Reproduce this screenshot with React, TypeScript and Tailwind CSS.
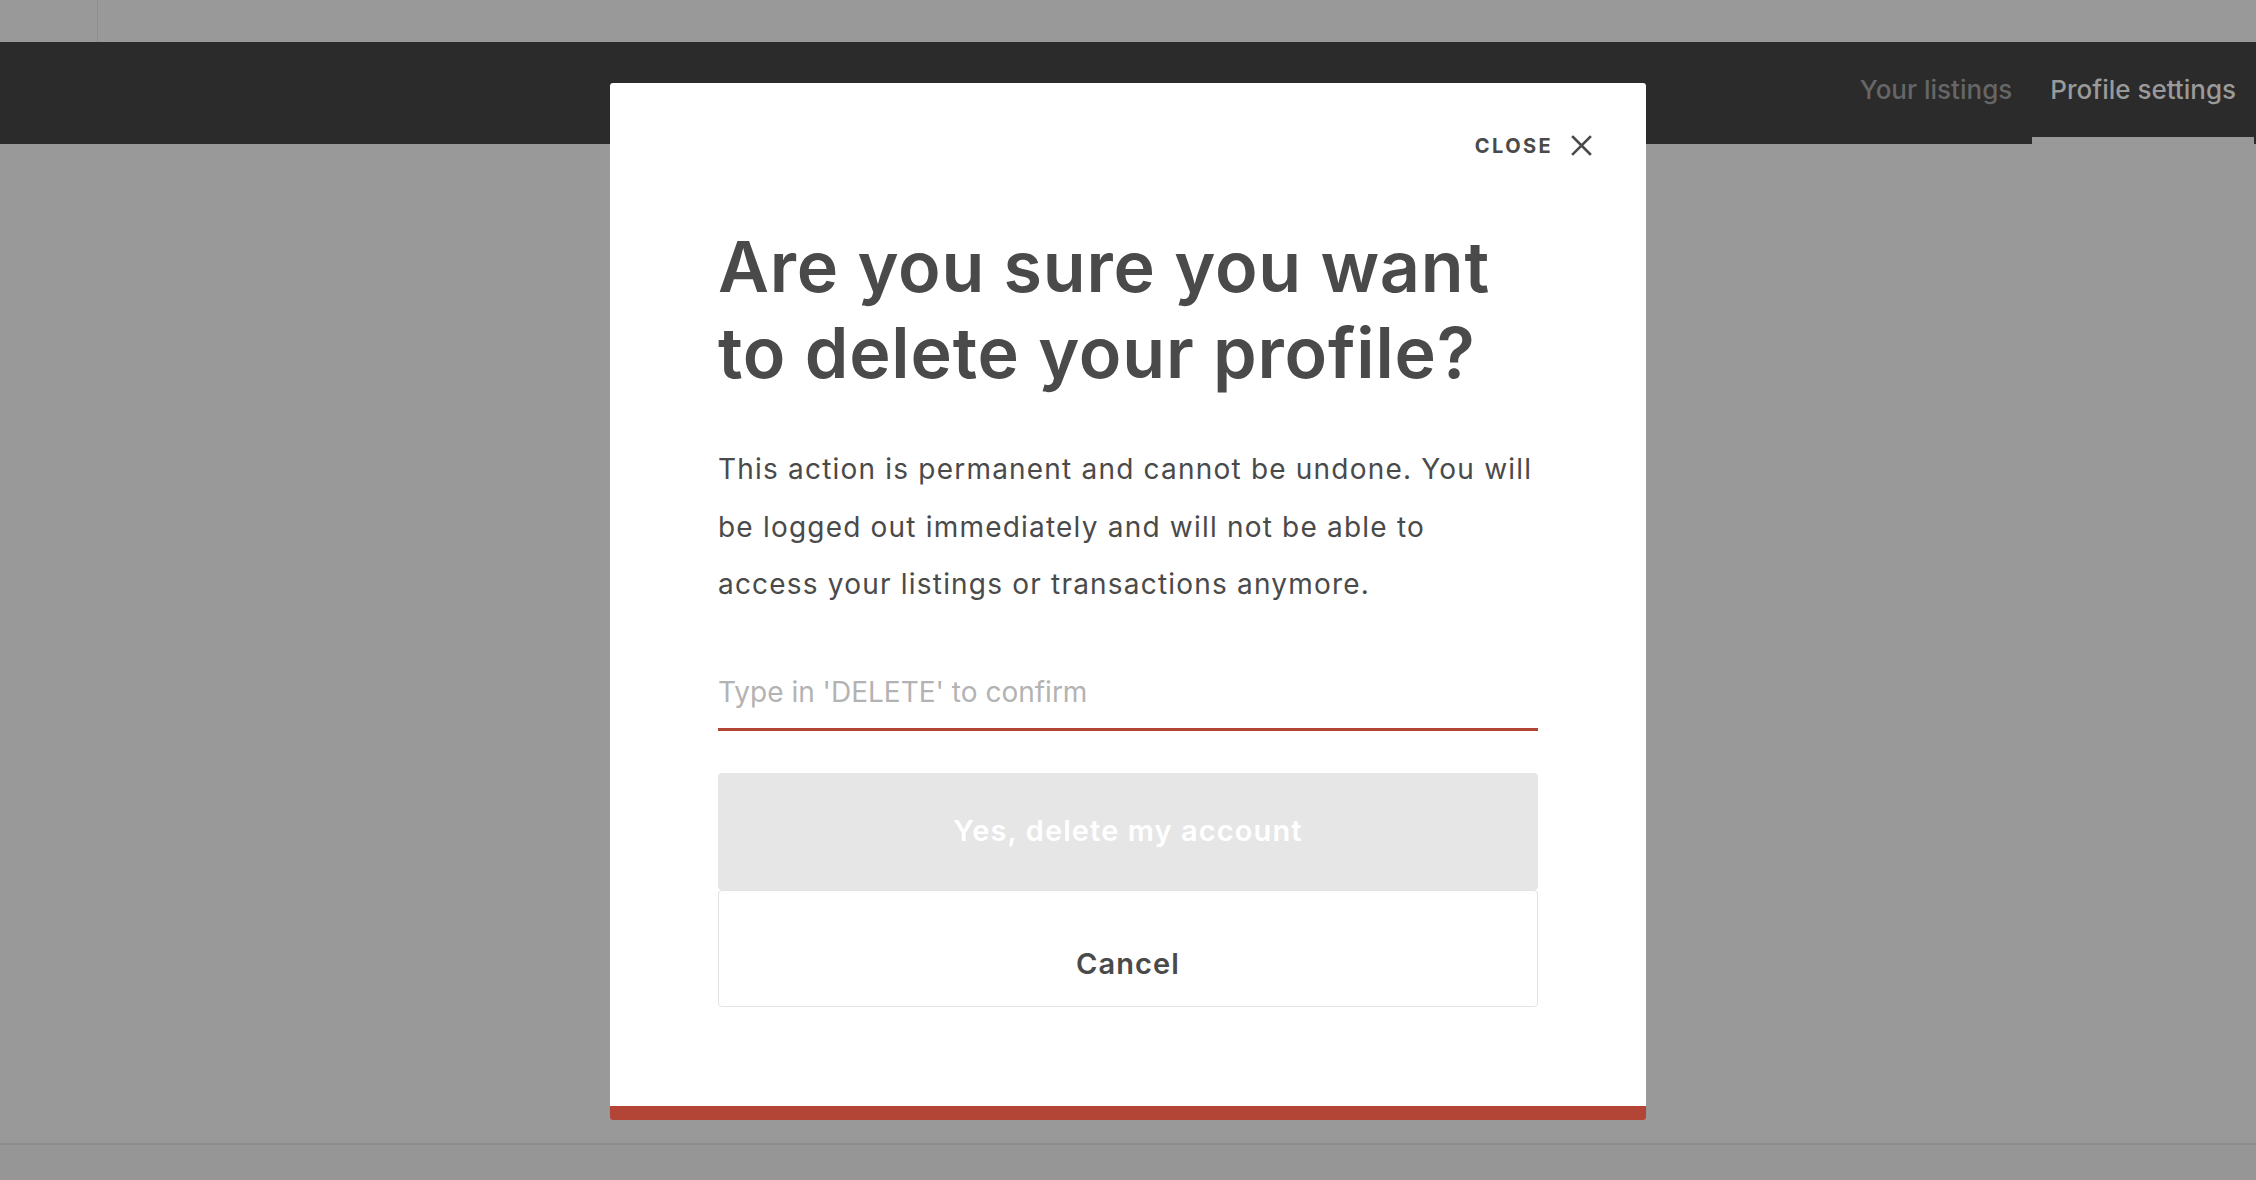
import React from "react";

const font = { fontFamily: "Inter, 'Noto Sans', sans-serif" };

export default function App() {
  return (
    <div className="relative w-full h-[1180px] overflow-hidden bg-[#999999] flex flex-col" style={font}>
      {/* top strip */}
      <div className="h-[42px] flex shrink-0">
        <div className="w-[98px] border-r border-[#8e8e8e]" />
      </div>
      {/* nav */}
      <nav className="h-[102px] bg-[#2b2b2b] flex justify-end items-stretch gap-[2px] pr-[2px] shrink-0">
        <a className="flex items-center px-[18px] border-b-[7px] border-transparent text-[26px] font-medium text-[#666666]">Your listings</a>
        <a className="flex items-center px-[18px] border-b-[7px] border-[#999999] text-[26px] font-medium text-[#9a9a9a]">Profile settings</a>
      </nav>
      <main className="flex-1" />
      <footer className="h-[37px] border-t-2 border-[#8c8c8c] bg-[#969696] shrink-0" />

      {/* modal */}
      <div className="absolute inset-x-0 top-[83px] flex justify-center">
        <div className="w-[1036px] h-[1037px] bg-white rounded-[3px] border-b-[14px] border-[#b34536] flex flex-col">
          <div className="flex justify-end pr-[54px] pt-[52px]">
            <button className="flex items-center gap-[18px] text-[#4a4a4a]">
              <span className="text-[20px] font-bold tracking-[2.4px] leading-none">CLOSE</span>
              <svg width="21" height="21" viewBox="0 0 21 21" fill="none" stroke="#4a4a4a" strokeWidth="2.6" strokeLinecap="square">
                <path d="M2 2 L19 19 M19 2 L2 19" />
              </svg>
            </button>
          </div>
          <div className="px-[108px] pt-[68px] flex flex-col">
            <h1 className="text-[70px] leading-[86px] font-semibold text-[#4a4a4a] tracking-[0.8px]">
              Are you sure you want<br />to delete your profile?
            </h1>
            <p className="mt-[45px] text-[28px] leading-[57.5px] text-[#4a4a4a] tracking-[1.2px]">
              This action is permanent and cannot be undone. You will<br />
              be logged out immediately and will not be able to<br />
              access your listings or transactions anymore.
            </p>
            <div className="mt-[58px] border-b-[3px] border-[#b34536] h-[59px] flex items-start">
              <input
                className="w-full text-[28px] leading-[40px] text-[#4a4a4a] placeholder:text-[#b3b3b3] outline-none bg-transparent"
                placeholder="Type in 'DELETE' to confirm"
              />
            </div>
            <button className="mt-[42px] h-[117px] w-full rounded-[4px] bg-[#e6e6e6] text-white text-[29px] tracking-[1.1px] font-semibold">
              Yes, delete my account
            </button>
            <button className="h-[117px] w-full rounded-[4px] bg-white border border-[#e3e3e3] text-[#4a4a4a] text-[29px] tracking-[1.1px] font-semibold pt-[32px]">
              Cancel
            </button>
          </div>
        </div>
      </div>
    </div>
  );
}
